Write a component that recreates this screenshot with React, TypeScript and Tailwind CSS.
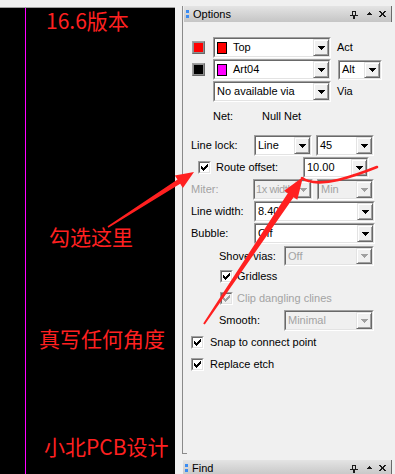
import React from 'react';

type P = { className?: string; children?: React.ReactNode; disabled?: boolean };

function arrowPoints(tx: number, ty: number, hx: number, hy: number, L: number, W: number, w: number, t: number) {
  const dx = hx - tx;
  const dy = hy - ty;
  const len = Math.sqrt(dx * dx + dy * dy);
  const ux = dx / len;
  const uy = dy / len;
  const nx = -uy;
  const ny = ux;
  const bx = hx - ux * L;
  const by = hy - uy * L;
  const pts: [number, number][] = [
    [tx + nx * t, ty + ny * t],
    [bx + nx * w, by + ny * w],
    [bx + nx * W, by + ny * W],
    [hx, hy],
    [bx - nx * W, by - ny * W],
    [bx - nx * w, by - ny * w],
    [tx - nx * t, ty - ny * t],
  ];
  return pts.map((p) => `${p[0].toFixed(1)},${p[1].toFixed(1)}`).join(' ');
}

function DropBtn({ disabled }: { disabled?: boolean }) {
  return (
    <div className="w-[16px] h-full shrink-0 bg-[#f0f0f0] border border-t-[#e3e3e3] border-l-[#e3e3e3] border-b-[#696969] border-r-[#696969] shadow-[inset_1px_1px_0_#ffffff,inset_-1px_-1px_0_#a0a0a0] flex items-center justify-center">
      <svg width="7" height="4" viewBox="0 0 7 4" shapeRendering="crispEdges">
        <path d="M0 0h7v1h-7z M1 1h5v1h-5z M2 2h3v1h-3z M3 3h1v1h-1z" fill={disabled ? '#a0a0a0' : '#000000'} />
      </svg>
    </div>
  );
}

function Combo({ className, children, disabled }: P) {
  return (
    <div className={`${className ?? ''} shrink-0 flex border border-t-[#a0a0a0] border-l-[#a0a0a0] border-b-white border-r-white`}>
      <div
        className={`flex-1 min-w-0 flex border border-t-[#696969] border-l-[#696969] border-b-[#e3e3e3] border-r-[#e3e3e3] ${
          disabled ? 'bg-[#f0f0f0] text-[#a3a3a3]' : 'bg-white text-black'
        }`}
      >
        <div className="flex-1 min-w-0 flex items-center pl-[2px] overflow-hidden whitespace-nowrap">{children}</div>
        <DropBtn disabled={disabled} />
      </div>
    </div>
  );
}

function Check({ className, disabled }: P) {
  return (
    <div className={`${className ?? ''} w-[13px] h-[13px] shrink-0 border border-t-[#a0a0a0] border-l-[#a0a0a0] border-b-white border-r-white`}>
      <div
        className={`w-full h-full border border-t-[#696969] border-l-[#696969] border-b-[#e3e3e3] border-r-[#e3e3e3] flex items-center justify-center ${
          disabled ? 'bg-[#f0f0f0]' : 'bg-white'
        }`}
      >
        <svg width="7" height="7" viewBox="0 0 7 7" shapeRendering="crispEdges">
          <path
            d="M6 0h1v1h-1z M5 1h2v1h-2z M0 2h1v1h-1z M4 2h3v1h-3z M0 3h2v1h-2z M3 3h3v1h-3z M0 4h5v1h-5z M1 5h3v1h-3z M2 6h1v1h-1z"
            fill={disabled ? '#a0a0a0' : '#000000'}
          />
        </svg>
      </div>
    </div>
  );
}

function ColorBtn({ className, children }: P) {
  return (
    <div className={`${className ?? ''} w-[13px] h-[13px] shrink-0 border border-t-[#a0a0a0] border-l-[#a0a0a0] border-b-[#696969] border-r-[#696969] bg-[#8e8e8e] p-[1px]`}>
      {children}
    </div>
  );
}

function PanelHeader({ title }: { title: string }) {
  return (
    <div className="ml-[1px] h-[16px] shrink-0 flex items-center bg-linear-to-b from-[#e4e4e4] to-[#c5c5c5] border-r border-[#6a6a6a]">
      <div className="ml-[2px] flex flex-col gap-[2px]">
        <div className="w-[3px] h-[3px] bg-[#3b8cf2]" />
        <div className="w-[3px] h-[3px] bg-[#3b8cf2]" />
      </div>
      <span className="ml-[4px] text-[11px] leading-none text-black">{title}</span>
      <svg className="ml-auto mt-[2px]" width="8" height="8" viewBox="0 0 8 8" shapeRendering="crispEdges">
        <path d="M2 0h4v1h-4z M2 1h1v3h-1z M5 1h1v3h-1z M0 4h8v1h-8z M3 5h2v3h-2z" fill="#1a1a1a" />
      </svg>
      <svg className="ml-[9px]" width="6" height="4" viewBox="0 0 6 4" shapeRendering="crispEdges">
        <path d="M2 0h1v1h-1z M1 1h3v1h-3z M0 2h5v1h-5z" fill="#1a1a1a" />
      </svg>
      <svg className="ml-[6px] mr-[5px]" width="7" height="6" viewBox="0 0 7 6" shapeRendering="crispEdges">
        <path
          d="M0 0h2v1h-2z M5 0h2v1h-2z M1 1h2v1h-2z M4 1h2v1h-2z M2 2h3v1h-3z M2 3h3v1h-3z M1 4h2v1h-2z M4 4h2v1h-2z M0 5h2v1h-2z M5 5h2v1h-2z"
          fill="#1a1a1a"
        />
      </svg>
    </div>
  );
}

export default function App() {
  const red = '#ff2020';
  const a1 = arrowPoints(108, 227, 194, 172, 18, 7.5, 2.5, 0.8);
  const a2 = arrowPoints(204, 324, 303, 177, 22, 8, 3.5, 1);

  return (
    <div className="relative w-[395px] h-[474px] overflow-hidden bg-[#f0f0f0] flex items-start font-['Liberation_Sans',Arial,sans-serif] text-[11px] text-black">
      {/* PCB canvas */}
      <div className="relative mt-[7px] w-[175px] h-[467px] shrink-0 bg-black border-t border-[#a0a0a0] flex flex-col font-['Noto_Sans_CJK_SC','Noto_Sans',sans-serif] text-[21px] leading-none text-[#ff2020]">
        <div className="absolute left-[25px] top-0 bottom-0 w-px bg-[#ff00ff]" />
        <div className="relative ml-[46px] mt-[2px] whitespace-nowrap">16.6版本</div>
        <div className="relative ml-[49px] mt-[195px] whitespace-nowrap">勾选这里</div>
        <div className="relative ml-[39px] mt-[81px] whitespace-nowrap">真写任何角度</div>
        <div className="relative ml-[44px] mt-[87px] whitespace-nowrap">小北PCB设计</div>
      </div>

      {/* Options panel */}
      <div className="ml-[7px] w-[210px] shrink-0 flex flex-col pt-[6px]">
        <div className="h-[448px] flex flex-col border-l border-[#8a8a8a]">
          <PanelHeader title="Options" />
          <div className="flex-1 flex flex-col">
            {/* Row 1: Top */}
            <div className="mt-[15px] h-[21px] flex items-center">
              <ColorBtn className="ml-[9px]">
                <div className="w-full h-full bg-[#ff0000]" />
              </ColorBtn>
              <Combo className="ml-[8px] w-[118px] h-[21px]">
                <span className="w-[10px] h-[12px] shrink-0 bg-[#ff0000] border border-black" />
                <span className="ml-[6px]">Top</span>
              </Combo>
              <span className="ml-[6px]">Act</span>
            </div>
            {/* Row 2: Art04 */}
            <div className="mt-[1px] h-[21px] flex items-center">
              <ColorBtn className="ml-[9px]">
                <div className="w-full h-full bg-black" />
              </ColorBtn>
              <Combo className="ml-[8px] w-[118px] h-[21px]">
                <span className="w-[10px] h-[12px] shrink-0 bg-[#ff00ff] border border-black" />
                <span className="ml-[6px]">Art04</span>
              </Combo>
              <Combo className="ml-[7px] w-[44px] h-[20px]">
                <span>Alt</span>
              </Combo>
            </div>
            {/* Row 3: via */}
            <div className="mt-[1px] h-[21px] flex items-center">
              <Combo className="ml-[30px] w-[118px] h-[21px]">
                <span>No available via</span>
              </Combo>
              <span className="ml-[6px]">Via</span>
            </div>
            {/* Net */}
            <div className="mt-[6px] h-[16px] flex items-center">
              <span className="ml-[30px] w-[49px]">Net:</span>
              <span>Null Net</span>
            </div>
            {/* Line lock */}
            <div className="mt-[11px] h-[21px] flex items-center">
              <span className="ml-[8px] w-[63px]">Line lock:</span>
              <Combo className="w-[58px] h-[21px]">
                <span>Line</span>
              </Combo>
              <Combo className="ml-[4px] w-[58px] h-[21px]">
                <span>45</span>
              </Combo>
            </div>
            {/* Route offset */}
            <div className="mt-[1px] h-[21px] flex items-center">
              <Check className="ml-[15px]" />
              <span className="ml-[5px] w-[87px]">Route offset:</span>
              <Combo className="w-[66px] h-[21px]">
                <span>10.00</span>
              </Combo>
            </div>
            {/* Miter */}
            <div className="mt-[1px] h-[21px] flex items-center">
              <span className="ml-[8px] w-[62px] text-[#a3a3a3]">Miter:</span>
              <Combo disabled className="w-[60px] h-[21px]">
                <span className="-ml-[1px] tracking-[-0.4px]">1x width</span>
              </Combo>
              <Combo disabled className="ml-[4px] w-[57px] h-[21px]">
                <span>Min</span>
              </Combo>
            </div>
            {/* Line width */}
            <div className="mt-[1px] h-[21px] flex items-center">
              <span className="ml-[8px] w-[63px]">Line width:</span>
              <Combo className="w-[121px] h-[21px]">
                <span>8.40</span>
              </Combo>
            </div>
            {/* Bubble */}
            <div className="mt-[1px] h-[21px] flex items-center">
              <span className="ml-[8px] w-[63px]">Bubble:</span>
              <Combo className="w-[121px] h-[21px]">
                <span>Off</span>
              </Combo>
            </div>
            {/* Shove vias */}
            <div className="mt-[2px] h-[20px] flex items-center">
              <span className="ml-[36px] w-[65px]">Shove vias:</span>
              <Combo disabled className="w-[90px] h-[20px]">
                <span>Off</span>
              </Combo>
            </div>
            {/* Gridless */}
            <div className="h-[20px] flex items-center">
              <Check className="ml-[37px]" />
              <span className="ml-[4px]">Gridless</span>
            </div>
            {/* Clip dangling clines */}
            <div className="mt-[2px] h-[20px] flex items-center">
              <Check disabled className="ml-[37px]" />
              <span className="ml-[4px] text-[#a3a3a3]">Clip dangling clines</span>
            </div>
            {/* Smooth */}
            <div className="mt-[2px] h-[21px] flex items-center">
              <span className="ml-[36px] w-[65px]">Smooth:</span>
              <Combo disabled className="w-[90px] h-[21px]">
                <span>Minimal</span>
              </Combo>
            </div>
            {/* Snap */}
            <div className="mt-[1px] h-[20px] flex items-center">
              <Check className="ml-[8px]" />
              <span className="ml-[6px]">Snap to connect point</span>
            </div>
            {/* Replace etch */}
            <div className="mt-[2px] h-[20px] flex items-center">
              <Check className="ml-[8px]" />
              <span className="ml-[6px]">Replace etch</span>
            </div>
            <div className="mt-auto h-px w-[4px] bg-[#8a8a8a]" />
          </div>
        </div>
        <div className="mt-[6px]">
          <PanelHeader title="Find" />
        </div>
      </div>

      {/* red annotation strokes */}
      <svg className="absolute left-0 top-0 pointer-events-none" width="395" height="474" viewBox="0 0 395 474">
        <polygon points={a1} fill={red} />
        <polygon points={a2} fill={red} />
        <path d="M302 178 C 310 184, 326 183, 338 180 S 362 173, 377 167" fill="none" stroke={red} strokeWidth="2.6" strokeLinecap="round" />
      </svg>
    </div>
  );
}
